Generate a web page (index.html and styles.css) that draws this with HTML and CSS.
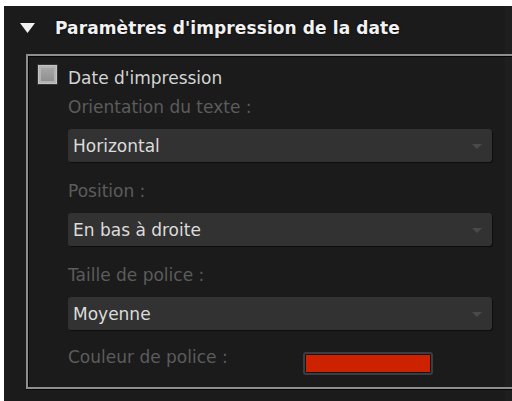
FILE: index.html
```html
<!DOCTYPE html>
<html lang="fr">
<head>
<meta charset="utf-8">
<title>Paramètres d'impression de la date</title>
<link rel="stylesheet" href="styles.css">
</head>
<body>
<div class="panel">
  <div class="header">
    <svg class="toggle" width="15" height="10" viewBox="0 0 15 10"><polygon points="0,0 15,0 7.5,10" fill="#f2f2f2"/></svg>
    <span class="title">Paramètres d'impression de la date</span>
  </div>
  <div class="group">
    <div class="check-row">
      <span class="checkbox"></span>
      <span class="check-label">Date d'impression</span>
    </div>
    <div class="label first">Orientation du texte :</div>
    <div class="select"><span>Horizontal</span><span class="arrow"></span></div>
    <div class="label">Position :</div>
    <div class="select"><span>En bas à droite</span><span class="arrow"></span></div>
    <div class="label">Taille de police :</div>
    <div class="select"><span>Moyenne</span><span class="arrow"></span></div>
    <div class="color-row">
      <span class="label-inline">Couleur de police :</span>
      <span class="swatch"><span class="swatch-fill"></span></span>
    </div>
  </div>
</div>
</body>
</html>
```

FILE: styles.css
```css
html, body {
  margin: 0;
  padding: 0;
  background: #ffffff;
}
body {
  width: 512px;
  height: 401px;
  overflow: hidden;
  font-family: "DejaVu Sans", "Liberation Sans", sans-serif;
}
.panel {
  margin: 6px 0 0 4px;
  height: 395px;
  background: #1b1b1b;
  border-right: 7px solid #1e1e1e;
  box-sizing: border-box;
}
.header {
  display: flex;
  align-items: flex-start;
  height: 48px;
  padding-left: 16px;
}
.toggle {
  margin-top: 17px;
  flex: none;
}
.title {
  margin-left: 20px;
  margin-top: 12px;
  font-size: 17px;
  line-height: 20px;
  font-weight: bold;
  letter-spacing: 0.1px;
  color: #f2f2f2;
  text-shadow: 0 0 2px rgba(0,0,0,0.9);
  white-space: nowrap;
}
.group {
  margin-left: 22px;
  width: 467px;
  border-top: 2px solid #8e8e8e;
  border-left: 2px solid #8e8e8e;
  border-bottom: 2px solid #8e8e8e;
  box-shadow: inset 1px 1px 0 #050505, 0 1px 0 #050505;
  padding: 9px 0 12px 40px;
  display: flex;
  flex-direction: column;
  box-sizing: content-box;
}
.check-row {
  display: flex;
  align-items: flex-start;
  margin-left: -30px;
  height: 23px;
}
.checkbox {
  width: 17px;
  height: 17px;
  border: 1px solid #c4c4c4;
  background: linear-gradient(#a9a9a9, #8d8d8d);
  box-shadow: inset 0 0 0 2px #b3b3b3, 0 0 0 1px #333;
  flex: none;
}
.check-label {
  margin-left: 11px;
  margin-top: 3px;
  font-size: 17px;
  line-height: 20px;
  color: #d4d4d4;
  white-space: nowrap;
}
.label {
  font-size: 17px;
  line-height: 20px;
  color: #5c5c5c;
  margin-top: 19px;
  margin-bottom: 12px;
  white-space: nowrap;
}
.label.first {
  margin-top: 9px;
  margin-bottom: 12px;
}
.select {
  width: 424px;
  height: 33px;
  box-sizing: border-box;
  background: #323232;
  border-radius: 3px;
  box-shadow: 1px 1px 0 #0d0d0d;
  display: flex;
  align-items: center;
  justify-content: space-between;
  padding: 0 10px 0 5px;
  font-size: 17px;
  color: #dcdcdc;
  white-space: nowrap;
}
.arrow {
  width: 0;
  height: 0;
  border-left: 5px solid transparent;
  border-right: 5px solid transparent;
  border-top: 5px solid #4a4a4a;
  margin-top: 2px;
}
.color-row {
  display: grid;
  grid-template-columns: 235px 130px;
  align-items: start;
  margin-top: 17px;
}
.label-inline {
  font-size: 17px;
  line-height: 20px;
  color: #5c5c5c;
  white-space: nowrap;
}
.swatch {
  margin-top: 5px;
  height: 23px;
  box-sizing: border-box;
  border: 2px solid #3c3c44;
  border-radius: 3px;
  padding: 1px;
  background: #161616;
  display: flex;
}
.swatch-fill {
  flex: 1;
  background: #cc2200;
}
```
